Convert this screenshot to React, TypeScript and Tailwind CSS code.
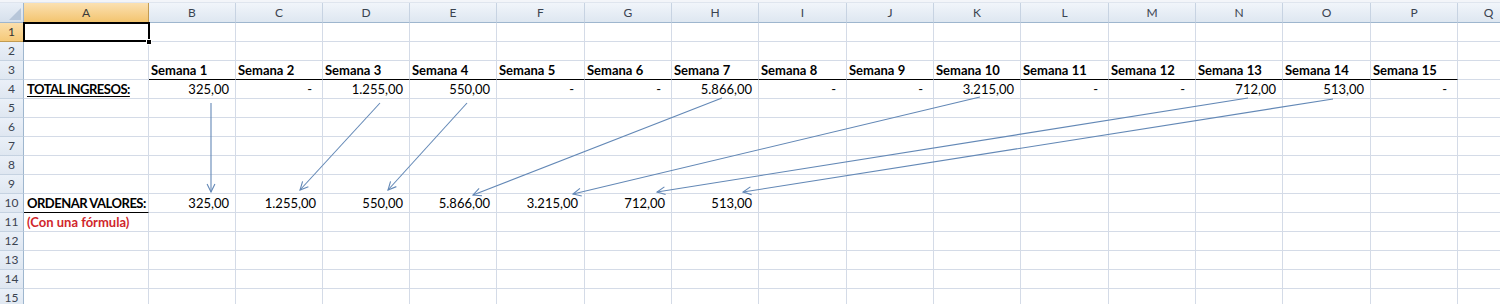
import React from "react";

const font = { fontFamily: "Lato, 'Open Sans', sans-serif" };

const cols = [
  { l: "A", w: 125 },
  { l: "B", w: 87 },
  { l: "C", w: 87 },
  { l: "D", w: 87 },
  { l: "E", w: 87 },
  { l: "F", w: 88 },
  { l: "G", w: 87 },
  { l: "H", w: 87 },
  { l: "I", w: 88 },
  { l: "J", w: 87 },
  { l: "K", w: 87 },
  { l: "L", w: 88 },
  { l: "M", w: 87 },
  { l: "N", w: 87 },
  { l: "O", w: 88 },
  { l: "P", w: 87 },
  { l: "Q", w: 62 },
];

const ingresos = ["325,00", "-", "1.255,00", "550,00", "-", "-", "5.866,00", "-", "-", "3.215,00", "-", "-", "712,00", "513,00", "-"];
const ordenados = ["325,00", "1.255,00", "550,00", "5.866,00", "3.215,00", "712,00", "513,00"];

type Cell = { text?: string; kind?: "label" | "num" | "head" | "red" | "under"; border?: boolean };

function rowCells(r: number): Cell[] {
  const cells: Cell[] = cols.map(() => ({}));
  if (r === 3) {
    for (let i = 1; i <= 15; i++) cells[i] = { text: `Semana ${i}`, kind: "head", border: true };
  }
  if (r === 4) {
    cells[0] = { text: "TOTAL INGRESOS:", kind: "under" };
    ingresos.forEach((v, i) => (cells[i + 1] = { text: v, kind: "num" }));
  }
  if (r === 10) {
    cells[0] = { text: "ORDENAR VALORES:", kind: "label", border: true };
    ordenados.forEach((v, i) => (cells[i + 1] = { text: v, kind: "num" }));
  }
  if (r === 11) cells[0] = { text: "(Con una fórmula)", kind: "red" };
  return cells;
}

// arrows from row 4 down to the sorted values in row 10
const arrows = [
  [211, 103, 211, 192],
  [380, 103, 300, 190],
  [467, 103, 388, 190],
  [722, 98, 473, 195],
  [980, 97, 573, 194],
  [1248, 98, 657, 192],
  [1333, 99, 743, 192],
];

function head(x1: number, y1: number, x2: number, y2: number) {
  const a = Math.atan2(y1 - y2, x1 - x2);
  const len = 9;
  const s = 0.45;
  const p1 = [x2 + len * Math.cos(a + s), y2 + len * Math.sin(a + s)];
  const p2 = [x2 + len * Math.cos(a - s), y2 + len * Math.sin(a - s)];
  return `M${p1[0]},${p1[1]} L${x2},${y2} L${p2[0]},${p2[1]}`;
}

export default function App() {
  return (
    <div className="relative w-[1500px] h-[304px] overflow-hidden bg-white text-black" style={font}>
      <div className="h-[3px] bg-[#f3f5f9] border-b border-[#dfe5ee]"></div>

      {/* column headers */}
      <div className="flex h-[20px]">
        <div className="relative w-[24px] shrink-0 bg-gradient-to-b from-[#e9eff7] to-[#d6e0ec] border-r border-b border-[#9eb6ce]">
          <div className="absolute right-[2px] bottom-[2px] w-0 h-0 border-l-[12px] border-l-transparent border-b-[12px] border-b-[#b7c6d9]"></div>
        </div>
        {cols.map((c, i) => (
          <div
            key={c.l}
            style={{ width: c.w }}
            className={`shrink-0 flex items-center justify-center text-[12px] border-r border-b ${
              i === 0
                ? "bg-gradient-to-b from-[#fbe1b1] to-[#f3c46e] border-[#c29b51] text-[#3a3a3a]"
                : "bg-gradient-to-b from-[#f1f5fa] to-[#dee7f1] border-r-[#c7d3e2] border-b-[#9eb6ce] text-[#3a4350]"
            }`}
          >
            {c.l}
          </div>
        ))}
      </div>

      {/* rows */}
      {Array.from({ length: 15 }, (_, k) => k + 1).map((r) => (
        <div key={r} className="flex h-[19px]">
          <div
            className={`w-[24px] shrink-0 flex items-center justify-center text-[12px] border-r border-b ${
              r === 1
                ? "bg-gradient-to-b from-[#fbdfac] to-[#f5c978] border-[#c29b51] text-[#333]"
                : "bg-gradient-to-b from-[#eaf0f8] to-[#dfe7f1] border-r-[#9eb6ce] border-b-[#c5d2e1] text-[#3a4350]"
            }`}
          >
            {r}
          </div>
          {rowCells(r).map((cell, i) => (
            <div
              key={i}
              style={{ width: cols[i].w }}
              className={`shrink-0 flex items-end pb-[1px] text-[13px] leading-[16px] whitespace-nowrap border-r border-r-[#d4dbe7] border-b ${
                cell.border ? "border-b-black" : "border-b-[#d4dbe7]"
              } ${cell.kind === "num" ? "justify-end" : "justify-start"} ${
                cell.kind === "num" ? (cell.text === "-" ? "pr-[10px]" : "pr-[6px]") : cell.kind === "head" ? "pl-[2px]" : "pl-[3px]"
              }`}
            >
              {cell.kind === "head" && <span className="font-bold">{cell.text}</span>}
              {cell.kind === "label" && <span className="font-bold tracking-[-0.5px]">{cell.text}</span>}
              {cell.kind === "under" && <span className="font-bold tracking-[-0.5px] underline underline-offset-2">{cell.text}</span>}
              {cell.kind === "red" && <span className="font-bold text-[#d0262b]">{cell.text}</span>}
              {cell.kind === "num" && <span>{cell.text}</span>}
            </div>
          ))}
        </div>
      ))}

      {/* active cell A1 */}
      <div className="absolute left-[23px] top-[22px] w-[127px] h-[20px] border-2 border-black pointer-events-none"></div>
      <div className="absolute left-[146px] top-[39px] w-[6px] h-[6px] bg-black border border-white"></div>

      <svg className="absolute left-0 top-0 pointer-events-none" width="1500" height="304">
        {arrows.map(([x1, y1, x2, y2], i) => (
          <g key={i} stroke="#6388b6" strokeWidth="1.1" fill="none">
            <line x1={x1} y1={y1} x2={x2} y2={y2} />
            <path d={head(x1, y1, x2, y2)} />
          </g>
        ))}
      </svg>
    </div>
  );
}
